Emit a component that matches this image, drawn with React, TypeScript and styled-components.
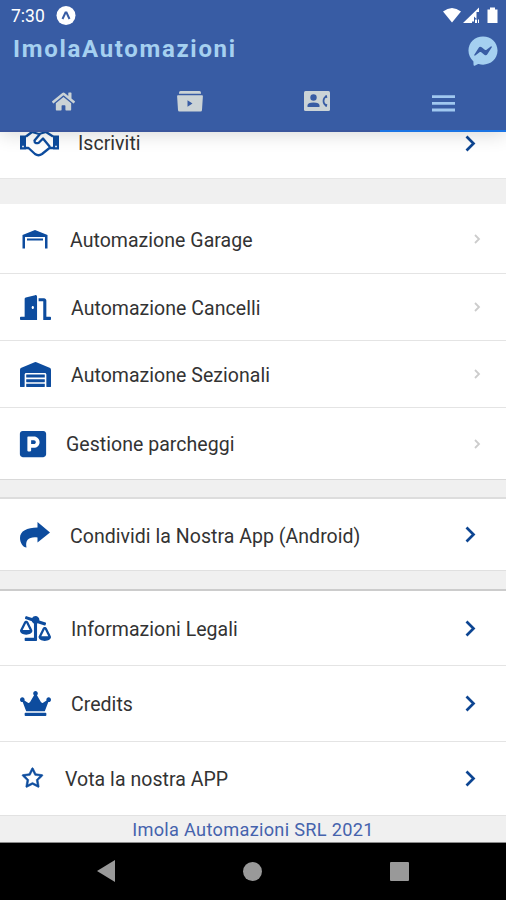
import React from 'react';
import styled, { createGlobalStyle } from 'styled-components';
import {
  FaHome,
  FaDoorOpen,
  FaWarehouse,
  FaParking,
  FaBalanceScaleRight,
  FaCrown,
  FaFacebookMessenger,
} from 'react-icons/fa';
import { AiOutlineStar } from 'react-icons/ai';

const GlobalStyle = createGlobalStyle`
  * { box-sizing: border-box; }
  body { margin: 0; background: #000; font-family: Roboto, "Liberation Sans", sans-serif; }
`;

const Screen = styled.main`
  width: 506px;
  height: 900px;
  display: flex;
  flex-direction: column;
  overflow: hidden;
  background: #f0f0f0;
`;

const Header = styled.header`
  position: relative;
  z-index: 1;
  height: 132px;
  flex: none;
  display: flex;
  flex-direction: column;
  background: #385ca4;
  box-shadow: 0 2px 18px rgba(0, 0, 0, 0.16);
`;

const StatusBar = styled.div`
  height: 32px;
  display: flex;
  align-items: center;
  padding: 0 8px 0 11px;
  color: #fff;
`;

const Clock = styled.span`
  width: 45px;
  font-size: 17.5px;
  line-height: 32px;
`;

const StatusIcons = styled.div`
  margin-left: auto;
  display: flex;
  align-items: center;
`;

const TitleBar = styled.div`
  height: 39px;
  display: flex;
  justify-content: space-between;
  padding: 0 8px 0 13px;
  color: #a5d0f0;
`;

const Title = styled.h1`
  margin: 0;
  font-size: 24px;
  line-height: 34px;
  font-weight: 700;
  letter-spacing: 1.68px;
`;

const Messenger = styled(FaFacebookMessenger)`
  margin-top: 4px;
`;

const Tabs = styled.nav`
  flex: 1;
  display: grid;
  grid-template-columns: repeat(4, 1fr);
`;

const Tab = styled.div<{ $active?: boolean }>`
  display: flex;
  align-items: center;
  justify-content: center;
  padding-top: ${(p) => (p.$active ? 5 : 1)}px;
  padding-left: 1px;
  color: ${(p) => (p.$active ? '#a0c8f0' : '#cbd3d6')};
  border-bottom: 2px solid ${(p) => (p.$active ? '#1b74e4' : '#3a559c')};
`;

const List = styled.section<{ $top?: string; $bottom?: string; $tucked?: boolean }>`
  flex: none;
  margin-top: ${(p) => (p.$tucked ? -24 : 0)}px;
  border-top: ${(p) => (p.$top ? `2px solid ${p.$top}` : '0')};
  border-bottom: ${(p) => (p.$bottom ? `1px solid ${p.$bottom}` : '0')};
  background: #fff;
`;

const Gap = styled.div<{ $h: number }>`
  flex: none;
  height: ${(p) => p.$h}px;
`;

const RowBox = styled.div<{ $h: number; $line?: boolean; $small?: boolean }>`
  height: ${(p) => p.$h}px;
  display: flex;
  align-items: center;
  padding: 0 ${(p) => (p.$small ? 25 : 29)}px 0 20px;
  border-bottom: ${(p) => (p.$line ? '1px solid #e4e4e4' : '0')};
`;

const IconSlot = styled.div<{ $w: number }>`
  flex: none;
  width: ${(p) => p.$w}px;
  display: flex;
  align-items: center;
  color: #0d4c9e;
`;

const Label = styled.span<{ $drop: number }>`
  flex: 1;
  padding-top: ${(p) => p.$drop}px;
  font-size: 19.5px;
  line-height: 24px;
  letter-spacing: 0.04px;
  color: #333;
  white-space: nowrap;
`;

const ParkingIcon = styled(FaParking)`
  margin-left: -2px;
`;

const StarIcon = styled(AiOutlineStar)`
  stroke: currentColor;
  stroke-width: 22px;
`;

const Footer = styled.footer`
  flex: none;
  height: 27px;
  text-align: center;
  font-size: 18.2px;
  line-height: 28px;
  letter-spacing: 0.3px;
  color: #4563ad;
  border-bottom: 1px solid #8a8a8a;
`;

const NavBar = styled.div`
  flex: none;
  height: 58px;
  display: flex;
  align-items: center;
  justify-content: space-between;
  padding: 0 97px 2px;
  background: #000;
`;

const Chevron = ({ small }: { small?: boolean }) =>
  small ? (
    <svg width="7" height="10" viewBox="0 0 7 10">
      <path d="M1 1l4 4-4 4" fill="none" stroke="#ccc" strokeWidth="1.8" />
    </svg>
  ) : (
    <svg width="12" height="17" viewBox="0 0 12 17">
      <path d="M1.500 1.500l7 7-7 7" fill="none" stroke="#0d4592" strokeWidth="2.7" />
    </svg>
  );

const HandshakeIcon = () => (
  <svg width="39" height="31" viewBox="0 0 39 31">
    <path d="M0 7.500h6v14H0zM33 7.500h6v14h-6z" fill="currentColor" />
    <path d="M2.200 18.500h1.600M35.200 18.500h1.600" stroke="#fff" strokeWidth="1.500" />
    <path
      d="M6 8.500L12 4l7 2 7-2 7 4.500M6 20h2.500l6.500 6q3.500 2.500 7 0l7.500-6H33M20 6l-5.500 6.500q0 3.500 4 2.500l4.500-4.500 7 8.500"
      fill="none"
      stroke="currentColor"
      strokeWidth="2.300"
      strokeLinejoin="round"
    />
  </svg>
);

const GarageIcon = () => (
  <svg width="30" height="22" viewBox="0 -2 30 22">
    <path d="M2.500 5L15 0l12.500 5v13.500H25V7H5v11.500H2.500z" fill="currentColor" />
    <path d="M7 9.500h16" stroke="currentColor" strokeWidth="2" />
  </svg>
);

const ShareIcon = () => (
  <svg width="30" height="26" viewBox="0 0 30 26">
    <path d="M17.500 0L30 10.500 17.500 20.500V15.500C9 14.500 5 18 6.500 25.500 3 25.500 0 20.500 0 16 0 9 7 5.500 17.500 5.500z" fill="currentColor" />
  </svg>
);

const VideoIcon = () => (
  <svg width="26" height="21" viewBox="0 0 26 21">
    <path d="M3.500 0h19q1.500 0 1.500 2v.8H2V2q0-2 1.500-2zM1 4.200h24q1 0 .9 1L25 19q0 1.500-1.500 1.500h-21Q1 20.500 1 19L.1 5.200q-.1-1 .9-1zM10.500 9.300v6.400l5-3.200z" fill="currentColor" fillRule="evenodd" />
  </svg>
);

const ContactIcon = () => (
  <svg width="26" height="20" viewBox="0 0 26 20">
    <rect width="26" height="20" rx="1.500" fill="currentColor" />
    <circle cx="9.500" cy="6.500" r="3.200" fill="#385ca4" />
    <path d="M3.500 16v-1.500q0-3 6-3t6 3V16z" fill="#385ca4" />
    <path d="M22.500 5q-3 1.800-3 5t3 5" fill="none" stroke="#385ca4" strokeWidth="1.700" />
    <path d="M21 5l1.600-1 .8 2.600-1.700.6zM21 15l1.600 1 .8-2.600-1.700-.6z" fill="#385ca4" />
  </svg>
);

const MenuIcon = () => (
  <svg width="23" height="17" viewBox="0 0 23 17">
    <path d="M0 1.700h23M0 8.300h23M0 15h23" stroke="currentColor" strokeWidth="2.800" />
  </svg>
);

type RowProps = {
  icon: React.ReactNode;
  label: string;
  h: number;
  w?: number;
  drop?: number;
  line?: boolean;
  small?: boolean;
};

const Row = ({ icon, label, h, w = 50, drop = 3, line, small }: RowProps) => (
  <RowBox $h={h} $line={line} $small={small}>
    <IconSlot $w={w}>{icon}</IconSlot>
    <Label $drop={drop}>{label}</Label>
    <Chevron small={small} />
  </RowBox>
);

export default function App() {
  return (
    <Screen>
      <GlobalStyle />
      <Header>
        <StatusBar>
          <Clock>7:30</Clock>
          <svg width="20" height="20" viewBox="0 0 20 20">
            <circle cx="10" cy="9.500" r="9.500" fill="#fff" />
            <path d="M6.500 13L9.500 6.500h1l3 6.500" fill="none" stroke="#385ca4" strokeWidth="2" />
          </svg>
          <StatusIcons>
            <svg width="55" height="18" viewBox="0 0 55 18">
              <path d="M0 4.500Q9-2.500 18 4.500L9 15.500z" fill="#fff" />
              <path d="M20 16L36 .5V5h-2.500v7L31 9.500v5h-2v1.500zM32 12.500h2v3.500h-2zM35 12.500h1v3.500h-1z" fill="#fff" />
              <path d="M44.500 2.500H47V.5h5v2h2.500V16h-10z" fill="#fff" />
            </svg>
          </StatusIcons>
        </StatusBar>
        <TitleBar>
          <Title>ImolaAutomazioni</Title>
          <Messenger size={30} />
        </TitleBar>
        <Tabs>
          <Tab><FaHome size={23} /></Tab>
          <Tab><VideoIcon /></Tab>
          <Tab><ContactIcon /></Tab>
          <Tab $active><MenuIcon /></Tab>
        </Tabs>
      </Header>

      <List $tucked $bottom="#e6e6e6">
        <Row icon={<HandshakeIcon />} label="Iscriviti" h={70} w={58} drop={1} />
      </List>
      <Gap $h={25} />
      <List $bottom="#d9d9d9">
        <Row icon={<GarageIcon />} label="Automazione Garage" h={70} drop={4} line small />
        <Row icon={<FaDoorOpen size={31} />} label="Automazione Cancelli" h={67} w={51} drop={4} line small />
        <Row icon={<FaWarehouse size={31} />} label="Automazione Sezionali" h={67} w={51} drop={4} line small />
        <Row icon={<ParkingIcon size={30} />} label="Gestione parcheggi" h={71} w={46} small />
      </List>
      <Gap $h={17} />
      <List $top="#dddddd" $bottom="#e0e0e0">
        <Row icon={<ShareIcon />} label="Condividi la Nostra App (Android)" h={71} drop={4} />
      </List>
      <Gap $h={18} />
      <List $top="#cccccc" $bottom="#e2e2e2">
        <Row icon={<FaBalanceScaleRight size={31} />} label="Informazioni Legali" h={75} w={51} drop={4} line />
        <Row icon={<FaCrown size={31} />} label="Credits" h={76} w={51} line />
        <Row icon={<StarIcon size={25} />} label="Vota la nostra APP" h={73} w={45} />
      </List>
      <Footer>Imola Automazioni SRL 2021</Footer>
      <NavBar>
        <svg width="18" height="22" viewBox="0 0 18 22">
          <path d="M18 0v22L0 11z" fill="#999" />
        </svg>
        <svg width="19" height="19" viewBox="0 0 19 19">
          <circle cx="9.500" cy="9.500" r="9.500" fill="#999" />
        </svg>
        <svg width="19" height="19" viewBox="0 0 19 19">
          <rect width="19" height="19" rx="1" fill="#999" />
        </svg>
      </NavBar>
    </Screen>
  );
}
